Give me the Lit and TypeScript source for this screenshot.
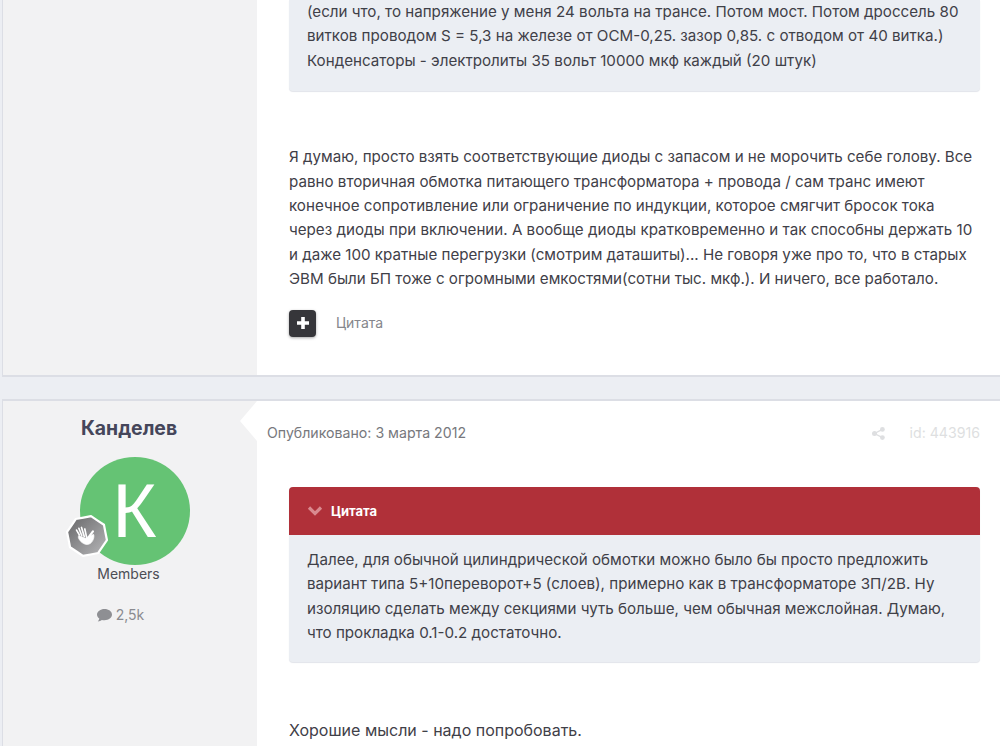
import {LitElement, css, html, svg} from "lit";
import {customElement} from "lit/decorators.js";

// scalloped rank badge outline: 8 points joined by concave curves
const badgeOutline = () => {
    const cx = 20, cy = 20, outer = 18.5, inner = 17;
    let d = "";
    for (let i = 0; i < 8; i++) {
        const a = (i * Math.PI) / 4 - Math.PI / 2 + 0.2;
        const mid = a + Math.PI / 8;
        const next = a + Math.PI / 4;
        const p = (r: number, t: number) => `${(cx + r * Math.cos(t)).toFixed(2)} ${(cy + r * Math.sin(t)).toFixed(2)}`;
        if (i === 0) d += `M${p(outer, a)}`;
        d += ` Q${p(inner, mid)} ${p(outer, next)}`;
    }
    return d + "Z";
};

const rankBadge = svg`
    <defs>
        <linearGradient id="rank" x1="0" y1="0" x2="1" y2="1">
            <stop offset="0" stop-color="#666668"/>
            <stop offset="1" stop-color="#b8b8ba"/>
        </linearGradient>
    </defs>
    <path d="${badgeOutline()}" fill="url(#rank)" stroke="#fff" stroke-width="2" stroke-linejoin="round"/>
    <g fill="#fff" stroke="#fff" stroke-linecap="round">
        <path d="M15 25.5 C12.5 23 11.5 21.5 12.5 19.5 L18.5 22 L26 18.5 C27 21 25.5 25 23 26.8 C20.5 28.3 17.5 28 15 25.5Z" stroke-width=".6"/>
        <path d="M13 19 L10.5 14.6 M15.2 19.6 L12.6 13 M17.5 20.4 L15 12.2 M19.6 21 L18 13.6" stroke-width="1.5" fill="none"/>
        <path d="M21.5 21 L25.4 15.8" stroke-width="2" fill="none"/>
    </g>
`;

@customElement("app-root")
export class AppRoot extends LitElement {
    static styles = css`
      :host {
        display: block;
        height: 746px;
        overflow: hidden;
        background: #eceef3;
        font-family: Inter, "Liberation Sans", sans-serif;
        font-size: 15.16px;
        line-height: 24.4px;
        color: #3f4048;
      }

      .post {
        display: flex;
        margin-left: 2px;
        background: #fff;
        border-left: 1px solid #dcdee5;
      }

      .post.first {
        height: 375px;
        border-bottom: 2px solid #dcdee5;
      }

      .post.second {
        margin-top: 22px;
        height: 347px;
        border-top: 2px solid #dcdee5;
      }

      .author {
        flex: none;
        box-sizing: border-box;
        width: 254px;
        background: #f2f2f3;
        display: flex;
        flex-direction: column;
        align-items: center;
      }

      .name {
        margin-top: 14px;
        margin-right: 2px;
        font-size: 19.4px;
        line-height: 26px;
        font-weight: 700;
        color: #45465a;
      }

      .avatar-wrap {
        position: relative;
        margin-top: 16px;
        width: 110px;
        height: 108px;
        margin-left: 9px;
      }

      .avatar {
        width: 110px;
        height: 108px;
        border-radius: 50%;
        background: #65c374;
        color: #fff;
        display: flex;
        align-items: center;
        justify-content: center;
        font-family: "Liberation Sans", sans-serif;
        font-size: 76px;
        line-height: 1;
      }

      .rank {
        position: absolute;
        left: -15px;
        top: 57px;
        width: 44px;
        height: 44px;
      }

      .group {
        margin-top: -1px;
        margin-right: 3px;
        font-size: 14px;
        line-height: 20px;
        color: #4c4d55;
      }

      .count {
        display: flex;
        align-items: center;
        gap: 4px;
        margin-top: 21px;
        margin-right: 19px;
        font-size: 14px;
        line-height: 20px;
        color: #8a8b90;
      }

      .count svg {
        width: 15px;
        height: 13px;
      }

      .body {
        position: relative;
        flex: 1;
        min-width: 0;
        box-sizing: border-box;
        padding: 0 20px 0 32px;
      }

      .notch {
        position: absolute;
        left: -17px;
        top: 0;
        width: 17px;
        height: 40px;
      }

      .meta {
        display: flex;
        align-items: center;
        height: 20px;
        margin: 22px 0 0 -22px;
        font-size: 14.15px;
        color: #77787d;
      }

      .meta .share {
        width: 13px;
        height: 13px;
        margin-left: auto;
      }

      .meta .id {
        margin-left: 25px;
        color: #dedfe1;
      }

      .quote {
        background: #ebeef3;
        border-radius: 4px;
        box-shadow: 0 1px 1px #e2e4ea;
      }

      .first .quote {
        border-radius: 0 0 4px 4px;
        padding: 0 10px 18px 18px;
      }

      .second .quote {
        margin-top: 44px;
      }

      .quote-head {
        display: flex;
        align-items: center;
        gap: 8px;
        height: 48px;
        padding-left: 18px;
        border-radius: 4px 4px 0 0;
        background: #b03039;
        font-size: 13px;
        font-weight: 700;
        color: #fff;
      }

      .quote-head svg {
        width: 16px;
        height: 10px;
      }

      .quote-body {
        padding: 13px 10px 16px 18px;
      }

      .text {
        margin: 0;
      }

      .first .text {
        margin-top: 54px;
      }

      .second .text {
        margin-top: 56px;
        font-size: 16px;
      }

      .actions {
        display: flex;
        align-items: center;
        gap: 20px;
        margin-top: 18px;
        color: #85868b;
        font-size: 14px;
      }

      .plus {
        width: 27px;
        height: 27px;
        border-radius: 4px;
        background: #36363a;
        box-shadow: 0 1px 3px rgba(0, 0, 0, .35);
        display: flex;
        align-items: center;
        justify-content: center;
      }

      .plus svg {
        width: 12px;
        height: 12px;
      }
    `;

    render() {
        return html`
            <div class="post first">
                <div class="author"></div>
                <div class="body">
                    <div class="quote">
                        (если что, то напряжение у меня 24 вольта на трансе. Потом мост. Потом дроссель 80<br>
                        витков проводом S = 5,3 на железе от ОСМ-0,25. зазор 0,85. с отводом от 40 витка.)<br>
                        Конденсаторы - электролиты 35 вольт 10000 мкф каждый (20 штук)
                    </div>
                    <p class="text">
                        Я думаю, просто взять соответствующие диоды с запасом и не морочить себе голову. Все<br>
                        равно вторичная обмотка питающего трансформатора + провода / сам транс имеют<br>
                        конечное сопротивление или ограничение по индукции, которое смягчит бросок тока<br>
                        через диоды при включении. А вообще диоды кратковременно и так способны держать 10<br>
                        и даже 100 кратные перегрузки (смотрим даташиты)... Не говоря уже про то, что в старых<br>
                        ЭВМ были БП тоже с огромными емкостями(сотни тыс. мкф.). И ничего, все работало.
                    </p>
                    <div class="actions">
                        <span class="plus">
                            <svg viewBox="0 0 12 12"><path d="M4.2 0h3.6v4.2H12v3.6H7.8V12H4.2V7.8H0V4.2h4.2z" fill="#fff"/></svg>
                        </span>
                        <span>Цитата</span>
                    </div>
                </div>
            </div>
            <div class="post second">
                <div class="author">
                    <div class="name">Канделев</div>
                    <div class="avatar-wrap">
                        <div class="avatar">К</div>
                        <svg class="rank" viewBox="0 0 40 40">${rankBadge}</svg>
                    </div>
                    <div class="group">Members</div>
                    <div class="count">
                        <svg viewBox="0 0 15 13"><path d="M7.5 0C3.4 0 0 2.5 0 5.6c0 1.6.9 3 2.3 4-.1 1-.7 2-1.5 2.9 1.6-.1 3-.7 4.1-1.5.8.2 1.7.3 2.6.3 4.1 0 7.5-2.5 7.5-5.7S11.6 0 7.5 0z" fill="#8e8f93"/></svg>
                        <span>2,5k</span>
                    </div>
                </div>
                <div class="body">
                    <svg class="notch" viewBox="0 0 17 40"><path d="M17 0 0 20l17 20z" fill="#fff"/></svg>
                    <div class="meta">
                        <span>Опубликовано: 3 марта 2012</span>
                        <svg class="share" viewBox="0 0 13 13" fill="#dedfe1">
                            <circle cx="10.4" cy="2.4" r="2.4"/><circle cx="10.4" cy="10.6" r="2.4"/><circle cx="2.5" cy="6.5" r="2.5"/>
                            <path d="M2.5 6.5 10.4 2.4M2.5 6.5l7.9 4.1" stroke="#dedfe1" stroke-width="1.4"/>
                        </svg>
                        <span class="id">id: 443916</span>
                    </div>
                    <div class="quote">
                        <div class="quote-head">
                            <svg viewBox="0 0 16 10"><path d="M2 1.5 8 7.5l6-6" fill="none" stroke="#d98a8f" stroke-width="3.2"/></svg>
                            <span>Цитата</span>
                        </div>
                        <div class="quote-body">
                            Далее, для обычной цилиндрической обмотки можно было бы просто предложить<br>
                            вариант типа 5+10переворот+5 (слоев), примерно как в трансформаторе ЗП/2В. Ну<br>
                            изоляцию сделать между секциями чуть больше, чем обычная межслойная. Думаю,<br>
                            что прокладка 0.1-0.2 достаточно.
                        </div>
                    </div>
                    <p class="text">Хорошие мысли - надо попробовать.</p>
                </div>
            </div>
        `;
    }
}
